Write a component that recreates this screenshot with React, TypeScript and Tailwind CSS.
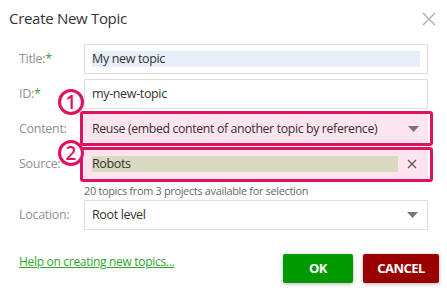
import React from "react";

const font = { fontFamily: '"Open Sans", "Noto Sans", sans-serif' };

function Label({ text, req }: { text: string; req?: boolean }) {
  return (
    <div className="w-[84px] pl-[19px] text-[12.5px] text-[#909090] tracking-[-0.3px]">
      {text}
      {req && <span className="text-[#3aa53a]">*</span>}
    </div>
  );
}

function Caret() {
  return (
    <svg width="11" height="6" viewBox="0 0 11 6" className="mr-[9px]">
      <path d="M0 0 L11 0 L5.5 6 Z" fill="#777" />
    </svg>
  );
}

export default function App() {
  return (
    <div style={font} className="relative w-[447px] h-[304px] bg-white overflow-hidden">
      <div className="flex items-center justify-between pl-[9px] pr-[11px] pt-[5px] h-[32px]">
        <div className="text-[15px] text-[#333] tracking-[-0.3px]">Create New Topic</div>
        <svg width="14" height="14" viewBox="0 0 14 14">
          <path d="M1 1 L13 13 M13 1 L1 13" stroke="#aaa" strokeWidth="1.2" />
        </svg>
      </div>

      <div className="mt-[12px] flex flex-col">
        <div className="flex items-center h-[30px]">
          <Label text="Title:" req />
          <div className="w-[344px] h-[30px] border border-[#ddd] flex items-center px-[7px]">
            <div className="w-full h-[16px] bg-[#e8eefa] flex items-center text-[12.5px] text-[#333] tracking-[-0.35px]">My new topic</div>
          </div>
        </div>
        <div className="flex items-center h-[30px] mt-[5px]">
          <Label text="ID:" req />
          <div className="w-[344px] h-[30px] border border-[#ddd] flex items-center px-[7px] text-[12.5px] text-[#333] tracking-[-0.35px]">
            my-new-topic
          </div>
        </div>
        <div className="flex items-center h-[30px] mt-[5px]">
          <Label text="Content:" />
          <div className="w-[344px] h-[30px] bg-[#fde4ee] flex items-center justify-between pl-[8px] text-[12.3px] text-[#333] tracking-[-0.35px]">
            <span>Reuse (embed content of another topic by reference)</span>
            <Caret />
          </div>
        </div>
        <div className="flex items-center h-[30px] mt-[5px]">
          <Label text="Source:" req />
          <div className="w-[344px] h-[30px] bg-[#fde4ee] flex items-center justify-between pl-[8px] pr-[8px]">
            <div className="w-[306px] h-[16px] bg-[#d9d8c1] flex items-center text-[12.5px] text-[#333] tracking-[-0.35px]">Robots</div>
            <svg width="10" height="10" viewBox="0 0 10 10" className="mr-[3px]">
              <path d="M1 1 L9 9 M9 1 L1 9" stroke="#555" strokeWidth="1.2" />
            </svg>
          </div>
        </div>
        <div className="pl-[84px] h-[17px] mt-[3px] text-[10.9px] text-[#666] tracking-[-0.3px] leading-[17px]">
          20 topics from 3 projects available for selection
        </div>
        <div className="flex items-center h-[30px] mt-[1px]">
          <Label text="Location:" />
          <div className="w-[344px] h-[30px] border border-[#ddd] flex items-center justify-between pl-[7px] text-[12.5px] text-[#333] tracking-[-0.35px]">
            <span>Root level</span>
            <Caret />
          </div>
        </div>
      </div>

      <div className="flex items-center justify-between mt-[24px] pl-[19px] pr-[8px]">
        <a className="text-[12px] text-[#2fa52f] underline tracking-[-0.3px] mt-[-14px]">Help on creating new topics...</a>
        <div className="flex gap-[10px]">
          <button className="w-[70px] h-[29px] rounded-[2px] bg-[#009a00] text-white font-bold text-[13px] tracking-[-0.4px] shadow-[0_1px_4px_rgba(0,0,0,0.3)]">OK</button>
          <button className="w-[76px] h-[29px] rounded-[2px] bg-[#990000] text-white font-bold text-[13px] tracking-[-0.5px] shadow-[0_1px_4px_rgba(0,0,0,0.3)]">CANCEL</button>
        </div>
      </div>

      {/* callout highlights */}
      <div className="absolute left-[80px] top-[111px] w-[353px] h-[35px] border-[3px] border-[#e0115f] rounded-[3px]" />
      <div className="absolute left-[80px] top-[147px] w-[353px] h-[35px] border-[3px] border-[#e0115f] rounded-[3px]" />
      <div className="absolute left-[58px] top-[89px] w-[26px] h-[26px] rounded-full bg-white border-[3px] border-[#e0115f] flex items-center justify-center text-[#e0115f] font-semibold text-[19px] leading-none">1</div>
      <div className="absolute left-[58px] top-[140px] w-[26px] h-[26px] rounded-full bg-white border-[3px] border-[#e0115f] flex items-center justify-center text-[#e0115f] font-semibold text-[19px] leading-none">2</div>
    </div>
  );
}
